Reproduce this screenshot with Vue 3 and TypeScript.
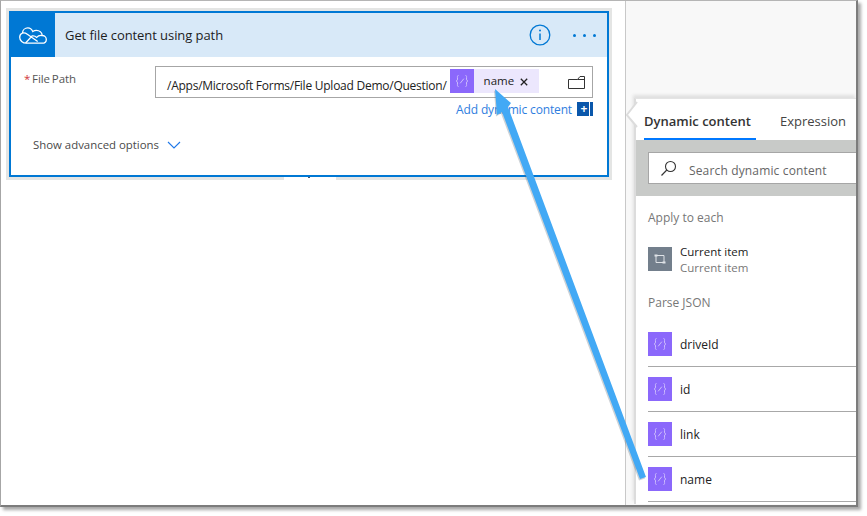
<script setup lang="ts">
const fields: string[] = ['driveId', 'id', 'link', 'name']
</script>

<template>
  <div class="page">
    <div class="window">
      <section class="canvas">
        <div class="card">
          <header class="card-head">
            <div class="brand">
              <svg width="28" height="17" viewBox="0 0 28 17" fill="none" stroke="#fff" stroke-width="1.3">
                <path d="M7.5 16.2h15.6c2.5 0 4.2-1.700 4.2-3.800 0-2.200-1.800-3.900-4-3.900-.4-3.100-3-5.200-5.900-5.200-1.300 0-2.600.4-3.600 1.200C12.600 2.100 10.800.9 8.900.9 5.900.9 3.600 3.200 3.500 6 1.800 6.700.7 8.300.7 10.200c0 3.300 2.900 6 6.800 6z" />
                <path d="M3.500 6c1.500-.3 3.200 0 4.500 1l10.700 7.500M23.100 8.500c-2.400-.3-4.200.4-5.400 1.900-1.400-1.300-3-1.800-4.500-1.500L6.600 16" />
              </svg>
            </div>
            <h1 class="card-title">Get file content using path</h1>
            <svg class="info" width="22" height="22" viewBox="0 0 22 22" fill="none" stroke="#0078d4">
              <circle cx="11" cy="11" r="9.800" stroke-width="1.300" />
              <path d="M11 9.500v6.500" stroke-width="1.500" />
              <circle cx="11" cy="6.500" r="1" fill="#0078d4" stroke="none" />
            </svg>
            <div class="dots"><i></i><i></i><i></i></div>
          </header>
          <div class="field-row">
            <label class="field-label"><span class="req">*</span> File Path</label>
            <div class="field-col">
              <div class="input">
                <span class="path">/Apps/Microsoft Forms/File Upload Demo/Question/</span>
                <span class="token">
                  <span class="tile tile-small">
                    <svg width="14" height="14" viewBox="0 0 14 14" fill="none" stroke="#cdbdfc" stroke-width="1">
                      <path d="M3.500 1.500C2 1.500 2.500 3 2.500 5 2.500 6.500 1.500 7 1 7c.5 0 1.500.5 1.500 2 0 2-.5 3.500 1 3.500M10.500 1.500c1.500 0 1 1.500 1 3.500 0 1.500 1 2 1.500 2-.5 0-1.500.5-1.500 2 0 2 .5 3.500-1 3.500M5.200 9.300 8.800 4.700" />
                    </svg>
                  </span>
                  <span class="token-name">name</span>
                  <svg class="token-x" width="8" height="8" viewBox="0 0 8 8" stroke="#222" stroke-width="1.300"><path d="M.8.800l6.400 6.400M7.200.800.800 7.200" /></svg>
                </span>
                <svg class="folder" width="17" height="13" viewBox="0 0 17 13" fill="none" stroke="#333" stroke-width="1"><path d="M.5 12.500V3.500L9.500 3.500 12 .5h4.500v12zM9.500 3.500h7" /></svg>
              </div>
              <div class="add-row">
                <span class="add-link">Add dynamic content</span>
                <span class="add-btn">+</span>
              </div>
            </div>
          </div>
          <div class="advanced">
            <span>Show advanced options</span>
            <svg width="14" height="8" viewBox="0 0 14 8" fill="none" stroke="#1f78e8" stroke-width="1.100"><path d="M1 1l6 6 6-6" /></svg>
          </div>
          <div class="shadow-gap"></div>
        </div>
      </section>

      <aside class="side">
        <svg class="notch" width="12" height="40" viewBox="0 0 12 40">
          <path d="M11 6 .8 19 11 31" fill="#fff" stroke="#dcdcdc" stroke-width="2" />
        </svg>
        <div class="panel">
          <nav class="tabs">
            <span class="tab active">Dynamic content</span>
            <span class="tab">Expression</span>
          </nav>
          <div class="search-band">
            <div class="search">
              <svg width="17" height="17" viewBox="0 0 17 17" fill="none" stroke="#333" stroke-width="1.100"><circle cx="10.500" cy="6.500" r="5" /><path d="M6.800 10 1.500 15.500" /></svg>
              <span class="search-text">Search dynamic content</span>
            </div>
          </div>
          <h2 class="group first">Apply to each</h2>
          <div class="current">
            <span class="tile tile-gray">
              <svg width="14" height="12" viewBox="0 0 14 12" fill="none" stroke="#dfe3e7" stroke-width="1">
                <path d="M3 2.500h8v7H3z" />
                <path d="M1.500 2.500h3M9.500 9.500h3" stroke-width="2" />
              </svg>
            </span>
            <div class="current-text">
              <strong>Current item</strong>
              <span>Current item</span>
            </div>
          </div>
          <h2 class="group parse">Parse JSON</h2>
          <div v-for="field in fields" :key="field" class="item">
            <span class="tile">
              <svg width="14" height="14" viewBox="0 0 14 14" fill="none" stroke="#cdbdfc" stroke-width="1">
                <path d="M3.500 1.500C2 1.500 2.500 3 2.500 5 2.500 6.500 1.500 7 1 7c.5 0 1.500.5 1.500 2 0 2-.5 3.500 1 3.500M10.500 1.500c1.500 0 1 1.500 1 3.500 0 1.500 1 2 1.500 2-.5 0-1.500.5-1.500 2 0 2 .5 3.500-1 3.500M5.200 9.300 8.800 4.700" />
              </svg>
            </span>
            <span class="item-name">{{ field }}</span>
          </div>
        </div>
      </aside>
    </div>

    <svg class="callout" width="867" height="516" viewBox="0 0 867 516">
      <path d="M640 479 646 477 508 107 511 103 495 89 497 115 502 112Z" fill="#5a6a76" opacity=".3" transform="translate(-1 1.500)" />
      <path d="M640 479 646 477 508 107 511 103 495 89 497 115 502 112Z" fill="#42a9f5" />
    </svg>
  </div>
</template>

<style>
html, body { margin: 0; background: #fff; }
</style>

<style scoped>
.page {
  position: relative;
  width: 867px;
  height: 516px;
  overflow: hidden;
  background: #fff;
  font-family: "Open Sans", "Noto Sans", sans-serif;
  color: #222;
}
.window {
  display: flex;
  width: 858px;
  height: 507px;
  box-sizing: border-box;
  border: 1px solid #a6a6a6;
  border-width: 1px 2px 2px 1px;
  border-color: #b5b5b5 #7c7c7c #7c7c7c #a6a6a6;
  box-shadow: 3px 3px 3px #a8a8a8;
  background: #fff;
}
.canvas {
  width: 625px;
  flex: none;
  box-sizing: border-box;
  padding: 10px 0 0 8px;
  border-right: 1px solid #c8c8c8;
}
.card {
  position: relative;
  width: 600px;
  height: 166px;
  box-sizing: border-box;
  border: 2px solid #0078d4;
  box-shadow: 0 0 0 3px #e4e5e4;
  background: #fff;
}
.shadow-gap {
  position: absolute;
  left: 273px;
  bottom: -5px;
  width: 52px;
  height: 3px;
  background: #fff;
}
.shadow-gap::after {
  content: "";
  position: absolute;
  left: 24px;
  top: 0;
  width: 2px;
  height: 1px;
  background: #44546a;
}
.card-head {
  display: flex;
  align-items: center;
  height: 44px;
  background: #d8e9f8;
}
.brand {
  display: flex;
  align-items: center;
  justify-content: center;
  width: 44px;
  height: 44px;
  background: #0078d4;
}
.card-title {
  margin: 0 0 0 10px;
  flex: 1;
  font-size: 13px;
  font-weight: 400;
  letter-spacing: -.07px;
  color: #1d1d1d;
}
.info { margin-right: 22px; }
.dots { display: flex; gap: 7px; margin-right: 11px; }
.dots i { width: 3px; height: 3px; border-radius: 50%; background: #0078d4; }
.field-row {
  display: flex;
  padding-top: 9px;
}
.field-label {
  width: 120px;
  padding: 4px 0 0 13px;
  box-sizing: border-box;
  font-size: 11.500px;
  letter-spacing: -.1px;
  word-spacing: -1px;
  color: #555;
  line-height: 18px;
}
.req { color: #d13438; }
.field-col { width: 438px; margin-left: 24px; }
.input {
  display: flex;
  align-items: center;
  box-sizing: border-box;
  height: 32px;
  padding: 0 7px 0 11px;
  border: 1px solid #a6a6a6;
  background: #fff;
}
.path { font-size: 12px; color: #222; white-space: nowrap; padding-top: 6px; letter-spacing: -.25px; }
.token {
  display: flex;
  align-items: center;
  width: 89px;
  height: 24px;
  margin: -2px 0 0 3px;
  background: #ece7fd;
}
.tile {
  display: flex;
  align-items: center;
  justify-content: center;
  flex: none;
  width: 24px;
  height: 24px;
  background: #8b68fb;
}
.tile-gray { background: #737f8c; }
.token-name { margin: -2px 0 0 10px; font-size: 11.500px; color: #222; }
.token-x { margin-left: 6px; margin-top: 2px; }
.folder { margin-left: auto; }
.add-row {
  display: flex;
  justify-content: flex-end;
  align-items: center;
  height: 22px;
  gap: 5px;
}
.add-link { font-size: 12px; letter-spacing: -.15px; color: #2f7ee0; }
.add-btn {
  display: flex;
  align-items: center;
  justify-content: center;
  width: 16px;
  height: 14px;
  box-sizing: border-box;
  padding-right: 2px;
  background: linear-gradient(90deg, #0a57ab 0 12px, #fff 12px 13px, #0a57ab 13px);
  color: #fff;
  font-size: 12px;
  font-weight: 700;
  line-height: 1;
}
.advanced {
  display: flex;
  align-items: center;
  gap: 8px;
  margin: 17px 0 0 22px;
  font-size: 11.400px;
  color: #4a4a4a;
}
.side {
  position: relative;
  flex: 1;
  min-width: 0;
  padding: 97px 0 0 8px;
  overflow: hidden;
  background: #f8f8f8;
}
.notch {
  position: absolute;
  left: 0;
  top: 95px;
  z-index: 1;
}
.panel {
  position: relative;
  height: 406px;
  box-sizing: border-box;
  border-left: 2px solid #dcdcdc;
  border-top: 1px solid #e4e4e4;
  box-shadow: -1px -3px 3px #e0e0e0;
  background: #fff;
  overflow: hidden;
}
.tabs {
  display: flex;
  gap: 24px;
  height: 41px;
  padding-left: 8px;
  box-sizing: border-box;
}
.tab {
  height: 41px;
  box-sizing: border-box;
  padding-top: 13px;
  font-size: 13px;
  color: #444;
}
.tab.active {
  width: 112px;
  font-weight: 600;
  color: #333;
  border-bottom: 2px solid #0078ff;
}
.search-band {
  height: 56px;
  box-sizing: border-box;
  padding: 12px 0 0 12px;
  background: #c8cac8;
}
.search {
  display: flex;
  align-items: center;
  gap: 12px;
  width: 300px;
  height: 32px;
  box-sizing: border-box;
  padding-left: 11px;
  border: 1px solid #a6a6a6;
  background: #fff;
  font-size: 12px;
  color: #666;
}
.search-text { padding-top: 5px; letter-spacing: .15px; }
.group {
  margin: 0;
  padding-left: 12px;
  font-size: 12px;
  font-weight: 400;
  color: #777;
  line-height: 18px;
}
.group.first { padding-top: 13px; }
.group.parse { margin-bottom: 10px; }
.current {
  display: flex;
  align-items: center;
  gap: 8px;
  height: 24px;
  margin: 20px 0 23px 12px;
}
.current-text {
  display: flex;
  flex-direction: column;
  padding-top: 2px;
  font-size: 11.500px;
  line-height: 16px;
  color: #777;
}
.current-text strong { font-weight: 500; color: #222; }
.item {
  display: flex;
  align-items: center;
  gap: 8px;
  height: 45px;
  box-sizing: border-box;
  margin-left: 12px;
  border-bottom: 1px solid #a8a8a8;
}
.item-name { font-size: 12px; font-weight: 500; color: #222; }
.callout {
  position: absolute;
  inset: 0;
  pointer-events: none;
}
</style>
